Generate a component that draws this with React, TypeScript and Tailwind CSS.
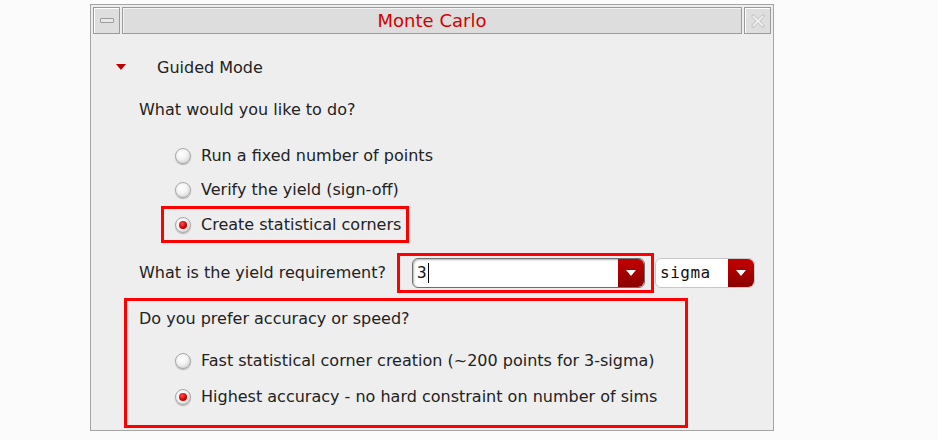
import React from "react";

const font = { fontFamily: '"DejaVu Sans", "Liberation Sans", sans-serif' };

function Radio({ checked, label }: { checked?: boolean; label: string }) {
  return (
    <div className="flex h-[30px] items-center">
      <span className="flex h-4 w-4 items-center justify-center rounded-full border border-[#a8a8a8] bg-[radial-gradient(circle_at_40%_35%,#ffffff_0%,#f2f2f2_45%,#c4c4c4_100%)] shadow-[0_1px_1px_rgba(0,0,0,0.25)]">
        {checked && (
          <span className="h-[8px] w-[8px] rounded-full bg-[radial-gradient(circle_at_40%_35%,#ff5050_0%,#d40000_55%,#900000_100%)]" />
        )}
      </span>
      <span className="ml-[10px] text-[16px] text-[#222]">{label}</span>
    </div>
  );
}

function DropButton() {
  return (
    <span className="flex h-full w-[26px] items-center justify-center rounded-r-[6px] bg-[linear-gradient(#c40000,#8a0000)]">
      <svg width="10" height="6" viewBox="0 0 10 6">
        <path d="M0 0 H10 L5 6 Z" fill="#fff" />
      </svg>
    </span>
  );
}

export default function App() {
  return (
    <div className="h-[440px] w-[938px] overflow-hidden bg-[#fbfbfb]" style={font}>
      <div className="ml-[90px] mt-[4px] flex h-[427px] w-[684px] flex-col border border-[#a4a4a4] bg-[#eeeeee] p-[2px] pb-0">
        {/* title bar */}
        <div className="flex h-[27px] gap-[2px]">
          <div className="flex w-[27px] items-center justify-center border border-[#9a9a9a] bg-[#dedede] shadow-[inset_1px_1px_0_#fff]">
            <span className="h-[5px] w-[14px] rounded-[1px] border border-[#9c9c9c] bg-[#e8e8e8]" />
          </div>
          <div className="flex flex-1 items-center justify-center border border-[#9a9a9a] bg-[#dddddd] shadow-[inset_1px_1px_0_#f4f4f4]">
            <span className="text-[18px] text-[#d40000]">Monte Carlo</span>
          </div>
          <div className="flex w-[27px] items-center justify-center border border-[#9a9a9a] bg-[#dedede] shadow-[inset_1px_1px_0_#fff]">
            <svg width="14" height="14" viewBox="0 0 14 14">
              <path
                d="M2 2 L12 12 M12 2 L2 12"
                stroke="#c8c8c8"
                strokeWidth="3.5"
                strokeLinecap="round"
              />
              <path d="M2 2 L12 12 M12 2 L2 12" stroke="#f6f6f6" strokeWidth="1.5" />
            </svg>
          </div>
        </div>

        {/* guided mode */}
        <div className="mt-[19px] flex h-[30px] items-center pl-[23px]">
          <svg width="10" height="6" viewBox="0 0 10 6" className="-mt-[3px]">
            <path d="M0 0 H10 L5 6 Z" fill="#c00000" />
          </svg>
          <span className="ml-[31px] text-[16px] text-[#222]">Guided Mode</span>
        </div>

        <div className="mt-[12px] flex h-[30px] items-center pl-[46px] text-[16px] text-[#222]">
          What would you like to do?
        </div>

        <div className="mt-[16px] pl-[82px]">
          <Radio label="Run a fixed number of points" />
        </div>
        <div className="mt-[4px] pl-[82px]">
          <Radio label="Verify the yield (sign-off)" />
        </div>
        <div className="ml-[68px] mt-[1px] flex h-[37px] w-[248px] items-center border-[3px] border-[#ff0000] pl-[11px]">
          <Radio checked label="Create statistical corners" />
        </div>

        {/* yield requirement */}
        <div className="mt-[10px] flex h-[40px] items-center">
          <div className="w-[304px] pl-[46px] text-[16px] text-[#222]">What is the yield requirement?</div>
          <div className="flex h-[40px] w-[257px] items-center border-[3px] border-[#ff0000] pl-[12px]">
            <div className="flex h-[30px] w-[233px] rounded-[6px] border border-[#6e6e6e] bg-white shadow-[inset_1px_1px_2px_rgba(0,0,0,0.3)]">
              <div className="flex flex-1 items-center pl-[4px]">
                <span className="text-[16px] text-[#111]" style={{ fontFamily: '"DejaVu Sans Mono", monospace' }}>
                  3
                </span>
                <span className="ml-[1px] h-[20px] w-px bg-black" />
              </div>
              <DropButton />
            </div>
          </div>
          <div className="ml-[1px] flex h-[30px] w-[100px] rounded-[6px] border border-[#c8c8c8] bg-white">
            <div className="flex flex-1 items-center pl-[4px]">
              <span className="text-[16px] tracking-[0.5px] text-[#111]" style={{ fontFamily: '"DejaVu Sans Mono", monospace' }}>
                sigma
              </span>
            </div>
            <DropButton />
          </div>
        </div>

        {/* accuracy or speed */}
        <div className="ml-[31px] mt-[5px] h-[130px] w-[564px] border-[3px] border-[#ff0000]">
          <div className="flex h-[36px] items-center pl-[12px] text-[16px] text-[#222]">
            Do you prefer accuracy or speed?
          </div>
          <div className="mt-[9px] pl-[48px]">
            <Radio label="Fast statistical corner creation (~200 points for 3-sigma)" />
          </div>
          <div className="mt-[6px] pl-[48px]">
            <Radio checked label="Highest accuracy - no hard constraint on number of sims" />
          </div>
        </div>
      </div>
    </div>
  );
}
